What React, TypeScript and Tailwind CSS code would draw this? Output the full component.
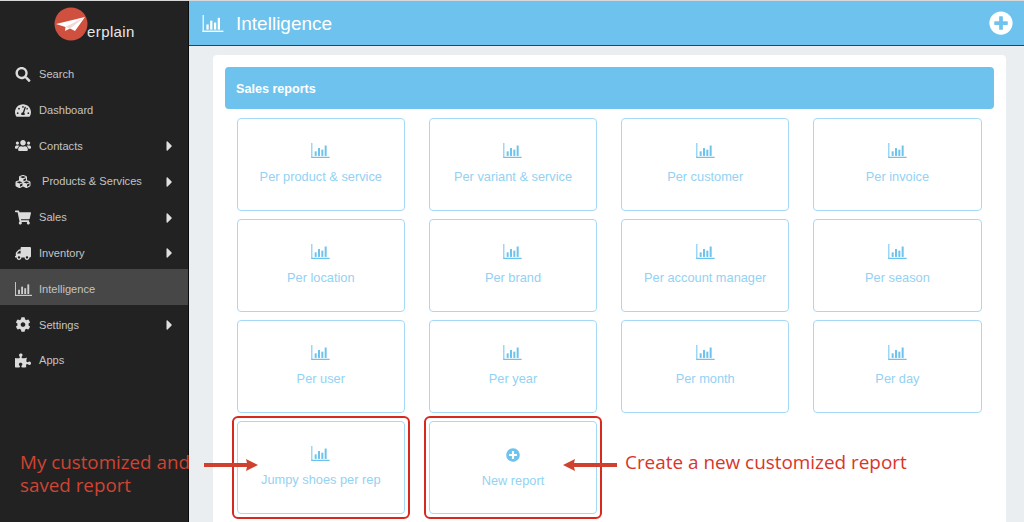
import React from "react";
import { FaSearch, FaTachometerAlt, FaUsers, FaCubes, FaShoppingCart, FaTruck, FaCog, FaPuzzlePiece, FaPlusCircle, FaCaretRight } from "react-icons/fa";

function Chart({ className }: { className?: string }) {
  return (
    <svg viewBox="0 0 22 18" className={className} fill="currentColor">
      <rect x="0" y="0" width="1.2" height="18" />
      <rect x="0" y="16.5" width="22" height="1.5" />
      <rect x="4" y="10" width="2.4" height="5.5" />
      <rect x="8" y="6" width="2.4" height="9.5" />
      <rect x="12" y="8" width="2.4" height="7.5" />
      <rect x="16" y="3" width="2.4" height="12.5" />
    </svg>
  );
}

const nav = [
  { label: "Search", Icon: FaSearch, w: 39 },
  { label: "Dashboard", Icon: FaTachometerAlt, w: 39 },
  { label: "Contacts", Icon: FaUsers, w: 39, arrow: true },
  { label: "Products & Services", Icon: FaCubes, w: 42, arrow: true },
  { label: "Sales", Icon: FaShoppingCart, w: 39, arrow: true },
  { label: "Inventory", Icon: FaTruck, w: 39, arrow: true },
  { label: "Intelligence", Icon: Chart, w: 39, active: true },
  { label: "Settings", Icon: FaCog, w: 39, arrow: true },
  { label: "Apps", Icon: FaPuzzlePiece, w: 39 },
];

const cards = [
  "Per product & service", "Per variant & service", "Per customer", "Per invoice",
  "Per location", "Per brand", "Per account manager", "Per season",
  "Per user", "Per year", "Per month", "Per day",
];

function Card({ label, plus, red }: { label: string; plus?: boolean; red?: boolean }) {
  return (
    <div className="relative h-[93px] rounded-[4px] border border-[#a5daf6] flex flex-col items-center bg-white">
      {plus ? (
        <FaPlusCircle className="mt-[26px] h-[14px] w-[14px] text-[#6ec3ee]" />
      ) : (
        <Chart className="mt-[24px] h-[15px] w-[19px] text-[#6ec3ee]" />
      )}
      <span className="mt-[11px] text-[12.8px] leading-[16px] text-[#93d2f3]">{label}</span>
      {red && <div className="absolute -left-[6px] -right-[6px] -top-[6px] -bottom-[6px] rounded-[6px] border-2 border-[#d9281e]" />}
    </div>
  );
}

function Arrow({ className, left }: { className: string; left?: boolean }) {
  return (
    <svg viewBox="0 0 54 12" className={className} fill="#d0402f">
      {left ? <path d="M0 6 L12 0 L11 4 H54 V8 H11 L12 12 Z" /> : <path d="M54 6 L42 0 L43 4 H0 V8 H43 L42 12 Z" />}
    </svg>
  );
}

export default function App() {
  return (
    <div className="relative h-[522px] w-[1024px] overflow-hidden bg-[#ebeef1] font-['Liberation_Sans',Arial,sans-serif]">
      <div className="h-[1px] bg-[#d8d8d8]" />
      <div className="flex h-[521px]">
        <aside className="w-[189px] shrink-0 bg-[#222222] border-r border-[#0c0c0c] flex flex-col">
          <div className="relative h-[38px] shrink-0">
            <svg viewBox="0 0 34 34" className="absolute left-[54px] top-[6px] h-[34px] w-[34px]">
              <circle cx="17" cy="17" r="16.5" fill="#d0503f" />
              <path d="M2 17 L31 10 L21 24 L16 21.5 L11 24 L11.5 20 Z" fill="#ffffff" />
              <path d="M11.5 20 L31 10 L16 21.5 Z" fill="#f0d8d4" />
            </svg>
            <span className="absolute left-[87px] top-[21px] text-[15px] leading-[20px] tracking-[0.4px] text-[#e8e8e8]">erplain</span>
          </div>
          <nav className="mt-[15px] flex flex-col">
            {nav.map(({ label, Icon, w, arrow, active }) => (
              <div key={label} className={`relative flex h-[35.8px] shrink-0 items-center pt-[5px] text-[11.1px] text-[#c4c4c4] ${active ? "bg-[#474747]" : ""}`}>
                <span className="flex w-[39px] shrink-0 items-center pl-[15px] text-[#dcdcdc]">
                  <Icon className={label === "Intelligence" ? "h-[14px] w-[17px] text-[#cfcfcf]" : label === "Inventory" ? "h-[15px] w-[16px] -scale-x-100" : "h-[15px] w-[16px]"} />
                </span>
                <span className={w === 42 ? "ml-[3px]" : ""}>{label}</span>
                {arrow && <FaCaretRight className="absolute left-[164px] h-[16px] w-[11px] text-[#e0e0e0]" />}
              </div>
            ))}
          </nav>
        </aside>
        <main className="flex-1 min-w-0">
          <header className="h-[45px] flex items-center bg-[#6ec3ee] border-b border-[#3e3e3e] pl-[13px] pr-[11px]">
            <Chart className="h-[17px] w-[22px] text-white" />
            <h1 className="ml-[12px] mt-[2px] text-[19px] text-white">Intelligence</h1>
            <FaPlusCircle className="ml-auto h-[24px] w-[24px] text-white" />
          </header>
          <div className="ml-[24px] mr-[18px] mt-[9px] h-[500px] rounded-[4px] bg-white p-[12px]">
            <div className="flex h-[42px] items-center rounded-[4px] bg-[#6ec3ee] pl-[11px] pt-[2px] text-[12.6px] font-bold text-white">Sales reports</div>
            <div className="mt-[9px] grid grid-cols-4 gap-x-[24px] gap-y-[8px] pl-[11.7px] pr-[12.5px]">
              {cards.map((c) => <Card key={c} label={c} />)}
              <Card label="Jumpy shoes per rep" red />
              <Card label="New report" plus red />
            </div>
          </div>
        </main>
      </div>
      <div className="absolute left-[20px] top-[451px] w-[180px] font-['Open_Sans',sans-serif] text-[18.8px] leading-[23px] text-[#cf4433]">My customized and<br />saved report</div>
      <Arrow className="absolute left-[204px] top-[459px] h-[12px] w-[54px]" />
      <Arrow left className="absolute left-[563px] top-[459px] h-[12px] w-[54px]" />
      <div className="absolute left-[625px] top-[451px] font-['Open_Sans',sans-serif] text-[18.9px] leading-[23px] text-[#d8352b]">Create a new customized report</div>
    </div>
  );
}
